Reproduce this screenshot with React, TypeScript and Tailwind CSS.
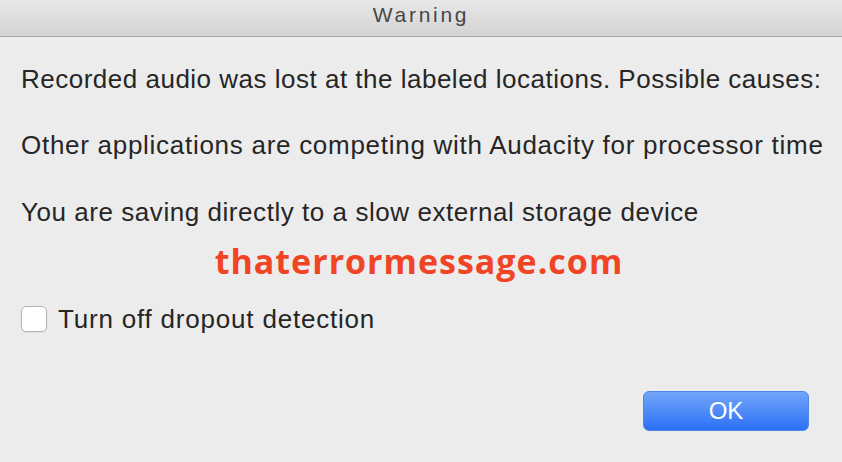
export default function App() {
  return (
    <div
      className="w-[842px] h-[462px] bg-[#ececec] flex flex-col overflow-hidden"
      style={{ fontFamily: "'Liberation Sans', Arial, sans-serif" }}
    >
      {/* Title bar */}
      <div className="h-[37px] shrink-0 bg-gradient-to-b from-[#e8e8e8] to-[#d3d3d3] border-b border-[#a8a8a8] flex justify-center pt-[3px]">
        <span className="text-[21px] leading-[24px] text-[#474747] tracking-[2.7px]">Warning</span>
      </div>

      {/* Body */}
      <div className="flex flex-col px-[21px] text-[#262626] text-[26px] whitespace-nowrap">
        <p className="mt-[27px] leading-[30px] tracking-[0.5px]">
          Recorded audio was lost at the labeled locations. Possible causes:
        </p>
        <p className="mt-[36px] leading-[30px] tracking-[0.72px]">
          Other applications are competing with Audacity for processor time
        </p>
        <p className="mt-[37px] leading-[30px] tracking-[0.55px]">
          You are saving directly to a slow external storage device
        </p>

        <div className="mt-[14px] h-[40px] flex justify-center pr-[4px]">
          <span
            className="text-[34px] leading-[40px] font-bold text-[#f04425] tracking-[1px]"
            style={{ fontFamily: "'Open Sans', 'Liberation Sans', sans-serif" }}
          >
            thaterrormessage.com
          </span>
        </div>

        <label className="mt-[23px] flex items-center gap-[11px]">
          <span className="w-[26px] h-[26px] rounded-[5px] bg-white border border-[#b3b3b3] shadow-[0_1px_0_rgba(0,0,0,0.05)]" />
          <span className="leading-[30px] tracking-[0.8px]">Turn off dropout detection</span>
        </label>

        <div className="mt-[57px] flex justify-end pr-[12px]">
          <button className="w-[166px] h-[40px] rounded-[6px] bg-gradient-to-b from-[#72a5f8] to-[#2b6ff6] border border-[#4f86ea] text-white text-[24px] tracking-normal leading-none">
            OK
          </button>
        </div>
      </div>
    </div>
  );
}
